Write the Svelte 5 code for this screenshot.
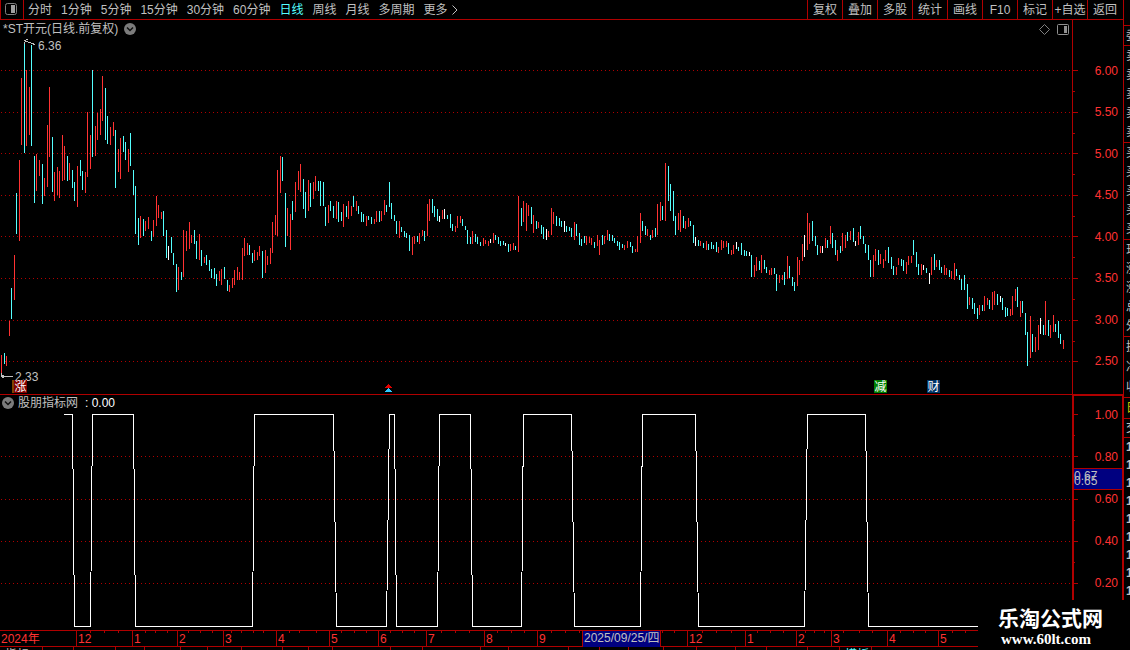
<script>
    const periods = ['分时', '1分钟', '5分钟', '15分钟', '30分钟', '60分钟', '日线', '周线', '月线', '多周期'];
    const tools = ['复权', '叠加', '多股', '统计', '画线', 'F10', '标记', '+自选', '返回'];

    let period = '日线';

    const width = 1072;
    const priceLevels = ['6.00', '5.50', '5.00', '4.50', '4.00', '3.50', '3.00', '2.50'];
    const priceLines = [70, 112, 153, 195, 236, 278, 320, 361];
    const priceMinor = [91, 133, 174, 216, 257, 299, 341];
    const valueLevels = ['1.00', '0.80', '0.60', '0.40', '0.20'];
    const valueLines = [414, 456, 499, 541, 583];
    const valueMinor = [435, 478, 520, 562];

    // colour + x, high, low
    const rawBars = `
        r1,355,375 c4,353,364 r6,356,366 r9,321,336 c11,288,319 r14,255,300 c16,193,234 r19,160,241 r21,78,145 c24,42,153
        r26,70,146 r29,87,135 c31,45,146 c34,156,203 r36,154,191 r39,160,176 c42,164,204 r44,178,196 r47,125,187 r49,87,157
        c52,137,192 r54,172,201 r57,167,195 r59,171,198 r62,135,181 r64,146,180 c67,156,181 r69,163,180 c72,170,188 c74,182,201
        r77,166,207 c80,160,176 c82,171,190 r85,172,193 r87,112,177 r90,135,169 c92,70,157 r95,126,156 r97,113,140 r100,109,135
        r102,76,121 c105,88,140 c107,116,144 r110,127,145 r113,122,136 c115,130,188 r118,149,172 r120,138,179 c123,136,152 c125,142,160
        r128,149,172 c130,133,166 c133,170,195 c135,186,234 c138,218,245 r140,216,238 c143,219,236 r145,221,231 r148,217,229 c151,231,241
        r153,220,237 r156,196,226 r158,205,218 r161,212,219 c163,211,236 c166,230,258 w168,246,260 c171,237,253 c173,253,265 c176,264,292
        r178,267,290 c181,272,280 r183,230,277 r186,231,251 r189,222,249 r191,235,243 c194,230,244 c196,241,259 r199,234,260 c201,250,266
        r204,257,263 c206,255,265 c209,260,271 c211,269,278 c214,268,279 c216,274,286 r219,271,281 r221,269,285 c224,267,279 c227,280,291
        r229,285,292 r232,278,288 r234,270,285 r237,267,280 r239,272,280 r242,248,280 r244,238,256 r247,243,255 c249,245,255 c252,253,263
        r254,250,261 r257,252,260 r259,246,256 c262,251,278 r265,250,273 r267,256,265 r270,248,264 r272,222,253 r275,215,235 r277,170,236
        r280,156,193 c282,157,181 c285,193,247 r287,208,236 r290,214,250 c292,201,220 r295,182,212 r298,171,190 r300,164,192 c303,179,209
        c305,192,218 r308,180,211 c310,183,207 r313,182,199 r315,176,191 c318,181,191 c320,181,206 c323,182,206 c325,207,226 r328,205,223
        c330,201,211 c333,206,218 r336,201,219 c338,202,222 c341,212,221 r343,204,227 c346,206,217 r348,201,219 r351,206,216 c353,196,207
        r356,201,211 c358,206,214 c361,212,222 c363,214,222 r366,216,226 c368,216,220 c371,217,224 r374,219,224 r376,211,222 c379,211,222
        r381,211,221 r384,200,215 c386,205,212 c389,182,207 c391,203,219 c394,215,221 c396,221,234 r399,221,238 c401,227,232 c404,231,237
        c406,233,238 c409,235,251 r412,237,255 r414,236,244 c417,236,242 r419,233,244 r422,230,236 c424,231,241 r427,204,236 r429,199,221
        c432,199,213 c434,206,217 c437,209,221 w439,216,222 r442,210,219 w444,209,219 c447,215,219 c450,214,228 c452,224,231 r455,226,232
        r457,216,228 r460,216,223 c462,219,226 c465,226,230 c467,230,244 c470,237,244 r472,231,244 c475,234,242 c477,237,244 c480,242,246
        r483,238,246 r485,240,244 r488,241,246 w490,239,243 r493,233,243 c495,235,240 c498,237,244 c500,241,246 c503,241,245 w505,243,246
        c508,244,252 r510,244,251 r513,243,250 c515,246,250 r518,196,252 c521,208,226 r523,201,222 r526,203,231 r528,205,216 c531,207,224
        r533,215,233 c536,221,229 r538,222,228 c541,225,234 c543,227,239 w546,229,240 r548,231,237 r551,208,235 r553,212,224 c556,216,226
        c559,218,226 c561,221,227 w564,221,232 c566,226,232 c569,227,231 c571,228,237 r574,222,240 c576,224,236 c579,233,245 c581,239,246
        c584,236,243 r586,236,245 r589,237,243 r591,238,245 c594,242,248 r597,235,246 r599,240,255 c602,235,245 r604,236,244 r607,230,240
        c609,234,241 c612,235,241 c614,238,243 c617,241,246 c619,242,250 c622,244,248 r624,245,250 r627,241,248 c630,242,247 c632,246,253
        r635,249,252 r637,236,252 r640,213,243 c642,221,231 c645,226,235 r647,229,236 c650,235,240 r652,230,238 c655,228,237 r657,204,235
        r660,202,221 c662,206,220 r665,163,221 c668,166,201 c670,184,211 c673,191,221 c675,216,235 r678,213,230 r680,210,232 c683,216,228
        r685,221,229 r688,218,227 c690,221,226 c693,225,243 w695,237,246 c698,240,246 r700,241,246 c703,243,248 r706,241,250 c708,244,250
        c711,242,249 c713,245,249 c716,242,252 r718,247,253 r721,240,250 r723,241,248 r726,241,247 c728,243,254 r731,250,255 r733,245,254
        w736,242,249 c738,247,251 c741,243,255 c744,250,256 c746,251,256 w749,252,256 c751,255,277 r754,265,277 r756,257,271 c759,261,270
        r761,255,273 c764,260,269 c766,267,273 r769,270,275 r771,268,275 c774,268,274 c776,274,291 r779,275,283 r782,275,280 c784,272,285
        r787,256,279 c789,266,278 c792,277,286 c794,282,291 r797,257,286 r799,260,275 r802,244,261 w804,235,257 r807,213,250 r809,223,244
        c812,221,241 c815,236,246 c817,245,255 r820,246,253 w822,246,253 r825,238,248 c827,240,248 r830,226,244 c832,233,248 c835,240,255
        r837,250,261 c840,246,253 r842,233,251 r845,235,248 c847,232,241 r850,231,240 c853,228,242 w855,241,246 r858,232,245 c860,226,239
        c863,236,244 c865,244,253 c868,245,260 c870,260,277 r873,255,277 r875,249,261 c878,250,265 r880,254,264 r883,259,268 r885,250,261
        c888,247,263 c891,257,269 c893,266,275 r896,267,275 r898,258,265 c901,259,266 c903,260,271 r906,262,274 r908,256,265 r911,256,263
        c913,240,255 c916,252,267 c918,264,275 r921,264,275 w923,265,270 c926,268,273 w929,273,284 r931,257,275 c934,254,270 r936,260,267
        c939,260,270 c941,267,273 r944,265,275 r946,268,275 c949,270,277 r951,271,279 r954,263,280 c956,269,276 c959,275,280 c961,279,290
        c964,275,290 c967,284,309 r969,297,305 c972,298,309 c974,303,314 c977,308,319 r979,305,315 c982,305,311 r984,296,311 r987,298,305
        c989,300,309 r992,292,310 r994,291,305 c997,294,305 w1000,296,302 c1002,298,310 c1005,307,317 c1007,308,316 r1010,309,316 r1012,296,315
        r1015,289,301 c1017,287,307 r1020,301,317 c1022,301,313 c1025,313,335 c1027,332,366 r1030,316,358 c1032,334,352 r1035,337,352
        r1038,325,350 w1040,318,334 c1043,325,335 r1045,301,335 c1048,320,336 r1050,325,338 r1053,315,332 c1055,324,332 c1058,321,338
        c1060,334,344 r1063,340,349`;

    const bars = rawBars.trim().split(/\s+/).map((item) => {
        const [x, high, low] = item.slice(1).split(',').map(Number);
        return { kind: item[0], x, high, low };
    });

    // x where the signal leaves one level and x where it reaches the other
    const flips = [
        [72, 74], [90, 92], [133, 135], [252, 254], [333, 336], [386, 389], [394, 396], [437, 439], [470, 472],
        [521, 523], [571, 574], [640, 642], [695, 698], [804, 807], [865, 868]
    ];
    let high = true;
    let signal = 'M64 414.5';
    for (const [from, to] of flips) {
        const y1 = high ? 414.5 : 626.5;
        const y2 = high ? 626.5 : 414.5;
        signal += ` L${from + 0.5} ${y1} L${to + 0.5} ${y2}`;
        high = !high;
    }
    signal += ' L1072 626.5';

    const months = [
        { x: 0, text: '2024年' }, { x: 76, text: '12' }, { x: 132, text: '1' }, { x: 177, text: '2' },
        { x: 223, text: '3' }, { x: 276, text: '4' }, { x: 329, text: '5' }, { x: 378, text: '6' },
        { x: 426, text: '7' }, { x: 484, text: '8' }, { x: 537, text: '9' },
        { x: 582, text: '2025/09/25/四', current: true }, { x: 660, text: '' }, { x: 687, text: '12' },
        { x: 745, text: '1' }, { x: 796, text: '2' }, { x: 831, text: '3' }, { x: 887, text: '4' },
        { x: 938, text: '5' }
    ];
    const weeks = [
        90, 104, 118, 145, 155, 167, 188, 200, 212, 231, 241, 253, 263, 289, 299, 316, 341, 354, 366, 390, 402,
        414, 441, 455, 469, 497, 511, 524, 551, 565, 579, 662, 674, 702, 716, 731, 757, 770, 783, 805, 814, 824,
        843, 859, 872, 900, 913, 925, 952, 965
    ];

    const tabs = [0, 42, 73, 115, 144, 180, 207, 241, 282, 308, 332, 390, 422, 480, 508, 568, 599, 628, 663, 696, 735, 766, 807, 839, 871]
        .map((x) => ({ x, text: '' }));
    tabs[0].text = '指标';
    tabs[23].text = '模板';

    const columns = (list) =>
        list.map((item, i) => `minmax(0, ${(i + 1 < list.length ? list[i + 1].x : 1123) - item.x}fr)`).join(' ');

    const badges = [
        { x: 12, text: '涨', kind: 'rise' },
        { x: 874, text: '减', kind: 'cut' },
        { x: 927, text: '财', kind: 'report' }
    ];

    const quotes = [
        { size: 'head', rows: ['委'] },
        { size: 'five', rows: ['卖', '卖', '卖', '卖', '卖'] },
        { size: 'five', rows: ['买', '买', '买', '买', '买'] },
        { size: 'five', rows: ['现', '涨', '涨', '总', '外'] },
        { size: 'three', rows: ['换', '净', '收'] },
        { size: 'name', rows: ['日'] },
        { size: 'deal', rows: ['交'] }
    ];
</script>

<div class="app">
    <div class="main">
        <header class="toolbar">
            <button class="side" aria-label="侧栏">
                <svg width="12" height="12" viewBox="0 0 12 12">
                    <rect x="0.5" y="0.5" width="11" height="11" rx="2" fill="none" stroke="#808080" />
                    <rect x="6" y="2" width="4" height="8" fill="#a0a0a0" />
                </svg>
            </button>
            <nav>
                {#each periods as name}
                    <button class:active={period === name} on:click={() => (period = name)}>{name}</button>
                {/each}
                <button class="more">更多
                    <svg width="6" height="10" viewBox="0 0 6 10"><path d="M0.5 0.5L5 5L0.5 9.5" fill="none" stroke="#c0c0c0" /></svg>
                </button>
            </nav>
            <div class="tools">
                {#each tools as name}
                    <button>{name}</button>
                {/each}
            </div>
        </header>

        <section class="pane price">
            <svg class="plot" viewBox="0 20 1072 374" preserveAspectRatio="none">
                {#each priceLines as y}
                    <line class="level" x1="1" x2={width} y1={y + 0.5} y2={y + 0.5} />
                {/each}
                {#each bars as bar}
                    <line class={bar.kind} x1={bar.x + 0.5} x2={bar.x + 0.5} y1={bar.high} y2={bar.low} />
                {/each}
                <path class="mark" d="M24.5 44V41.5M24 40.5L28 39.5M25 41L35 44.5M1.5 376V373M1 376.5H13M2 375.5H4M2 377.5H4" />
            </svg>
            <div class="caption">
                <span>*ST开元(日线.前复权)</span>
                <button aria-label="展开">
                    <svg width="12" height="12" viewBox="0 0 12 12">
                        <circle cx="6" cy="6" r="6" fill="#7c7c7c" />
                        <path d="M3 4.5L6 7.5L9 4.5" fill="none" stroke="#101010" stroke-width="1.5" />
                    </svg>
                </button>
                <div class="corner">
                    <svg width="11" height="11" viewBox="0 0 11 11"><path d="M5.5 0.5L10.5 5.5L5.5 10.5L0.5 5.5Z" fill="none" stroke="#808080" /></svg>
                    <svg width="12" height="11" viewBox="0 0 12 11">
                        <rect x="0.5" y="0.5" width="11" height="10" rx="1" fill="none" stroke="#909090" />
                        <rect x="7" y="2" width="3" height="7" fill="#909090" />
                    </svg>
                </div>
            </div>
            <span class="note top">6.36</span>
            <span class="note bottom">2.33</span>
            {#each badges as badge}
                <span class="badge {badge.kind}" style="left: {(badge.x / width) * 100}%">{badge.text}</span>
            {/each}
            <svg class="arrows" style="left: {(385 / width) * 100}%" width="7" height="8" viewBox="0 0 7 8">
                <path d="M3 0h1v1h1v1h1v1h1v1H0V3h1V2h1V1h1z" fill="#e00000" />
                <path d="M3 4h1v1h1v1h1v1h1v1H0V7h1V6h1V5h1z" fill="#30c8ff" />
            </svg>
        </section>
        <aside class="scale">
            <svg class="ticks" viewBox="0 20 6 374" preserveAspectRatio="none">
                {#each priceLines as y}
                    <line x1="0" x2="5" y1={y + 0.5} y2={y + 0.5} />
                {/each}
                {#each priceMinor as y}
                    <line x1="0" x2="2" y1={y + 0.5} y2={y + 0.5} />
                {/each}
            </svg>
            <div class="labels">
                {#each priceLevels as level}
                    <span>{level}</span>
                {/each}
            </div>
        </aside>

        <section class="pane value">
            <svg class="plot" viewBox="0 395 1072 235" preserveAspectRatio="none">
                {#each valueLines.slice(1) as y}
                    <line class="level" x1="1" x2={width} y1={y + 0.5} y2={y + 0.5} />
                {/each}
                <path class="signal" d={signal} />
            </svg>
            <div class="caption">
                <button aria-label="指标">
                    <svg width="12" height="12" viewBox="0 0 12 12">
                        <circle cx="6" cy="6" r="6" fill="#7c7c7c" />
                        <path d="M3 4.5L6 7.5L9 4.5" fill="none" stroke="#101010" stroke-width="1.5" />
                    </svg>
                </button>
                <span>股朋指标网</span>
                <span class="latest">: 0.00</span>
            </div>
        </section>
        <aside class="scale framed">
            <svg class="ticks" viewBox="0 396 6 234" preserveAspectRatio="none">
                {#each valueLines as y}
                    <line x1="0" x2="4" y1={y + 0.5} y2={y + 0.5} />
                {/each}
                {#each valueMinor as y}
                    <line x1="0" x2="1" y1={y + 0.5} y2={y + 0.5} />
                {/each}
            </svg>
            <div class="labels">
                {#each valueLevels as level}
                    <span>{level}</span>
                {/each}
            </div>
            <div class="cursor">
                <span>0.67</span>
                <span>0.65</span>
            </div>
        </aside>

        <div class="months" style="grid-template-columns: {columns(months)}">
            {#each months as month}
                <span class:current={month.current}>{month.text}</span>
            {/each}
            <svg viewBox="0 0 1123 2" preserveAspectRatio="none">
                {#each weeks as x}
                    <line x1={x + 0.5} x2={x + 0.5} y1="0" y2="2" />
                {/each}
            </svg>
        </div>
        <div class="tabs" style="grid-template-columns: {columns(tabs)}">
            {#each tabs as tab, i}
                <span class:active={i === 23}>{tab.text}</span>
            {/each}
        </div>
    </div>

    <aside class="quotes">
        {#each quotes as group}
            <div class="group {group.size}">
                {#each group.rows as row}
                    <span>{row}</span>
                {/each}
            </div>
        {/each}
        <div class="deals">
            {#each Array(9) as _}
                <span>14:57</span>
            {/each}
        </div>
    </aside>

    <div class="brand">
        <strong>乐淘公式网</strong>
        <a href="http://www.60lt.com">www.60lt.com</a>
    </div>
</div>

<style>
    :global(body) {
        margin: 0;
        background: #000;
    }

    .app {
        position: relative;
        display: grid;
        grid-template-columns: minmax(0, 1fr) 7px;
        height: 100vh;
        overflow: hidden;
        background: #000;
        color: #c0c0c0;
        font-family: "Liberation Sans", "Noto Sans CJK SC", sans-serif;
        font-size: 12px;
        line-height: 16px;
    }

    .main {
        display: grid;
        grid-template-columns: minmax(0, 1fr) 51px;
        grid-template-rows: 20px minmax(0, 374fr) minmax(0, 236fr) 17px 3px;
        min-height: 0;
    }

    button {
        padding: 0;
        border: 0;
        background: none;
        color: inherit;
        font: inherit;
        white-space: nowrap;
        cursor: pointer;
    }

    svg {
        display: block;
    }

    .toolbar,
    .months,
    .tabs {
        grid-column: 1 / -1;
    }

    .toolbar {
        display: flex;
        border-bottom: 1px solid #b00000;
    }

    .side {
        display: flex;
        width: 24px;
        box-sizing: border-box;
        padding: 3px 0 0 4px;
        border-left: 1px solid #b00000;
        border-right: 1px solid #b00000;
    }

    nav {
        display: flex;
        flex: 1;
        gap: 9px;
        padding-left: 4px;
    }

    .active {
        color: #54ffff;
    }

    .more {
        display: flex;
        align-items: center;
        gap: 4px;
    }

    .tools {
        display: flex;
        padding-right: 1px;
    }

    .tools button {
        width: 35px;
        box-sizing: border-box;
        border-left: 1px solid #b00000;
    }

    .pane {
        position: relative;
        min-width: 0;
    }

    .value {
        border-top: 1px solid #b00000;
    }

    .plot {
        position: absolute;
        width: 100%;
        height: 100%;
        shape-rendering: crispEdges;
    }

    .level {
        stroke: #b00000;
        stroke-dasharray: 1 3;
    }

    .r {
        stroke: #ff3232;
    }

    .c {
        stroke: #54ffff;
    }

    .w {
        stroke: #fff;
    }

    .mark {
        fill: none;
        stroke: #c0c0c0;
    }

    .signal {
        fill: none;
        stroke: #fff;
    }

    .caption {
        position: relative;
        display: flex;
        align-items: center;
        gap: 6px;
        height: 18px;
        padding-left: 3px;
    }

    .value .caption {
        gap: 4px;
        height: 16px;
        padding-left: 2px;
    }

    .caption span {
        line-height: 18px;
    }

    .latest {
        padding-left: 3px;
        color: #fff;
    }

    .corner {
        display: flex;
        gap: 7px;
        margin-left: auto;
        padding-right: 3px;
    }

    .note {
        position: absolute;
        line-height: 12px;
    }

    .note.top {
        top: 20px;
        left: 38px;
    }

    .note.bottom {
        bottom: 11px;
        left: 15px;
    }

    .badge {
        position: absolute;
        bottom: 1px;
        width: 13px;
        height: 13px;
        color: #fff;
        line-height: 14px;
        text-align: center;
    }

    .rise {
        border-left: 2px solid #804000;
        background: #800000;
    }

    .cut {
        background: #008000;
    }

    .report {
        background: #003468;
    }

    .arrows {
        position: absolute;
        bottom: 2px;
    }

    .scale {
        position: relative;
        display: flex;
        justify-content: space-between;
        border-left: 1px solid #b00000;
        color: #ff3232;
    }

    .framed {
        border: solid #b00000;
        border-width: 2px 1px 0 2px;
    }

    .ticks {
        width: 6px;
        height: 100%;
        stroke: #b00000;
        shape-rendering: crispEdges;
    }

    .labels {
        display: flex;
        flex-direction: column;
        justify-content: space-between;
        padding: 43px 5px 25px 0;
    }

    .framed .labels {
        padding: 11px 4px 39px 0;
    }

    .cursor {
        position: absolute;
        top: 72px;
        left: 0;
        right: 0;
        height: 20px;
        border-top: 1px solid #b00000;
        border-bottom: 1px solid #b00000;
        background: #000080;
        color: #c0c0c0;
    }

    .cursor span {
        position: absolute;
        top: 0;
        left: 0;
        line-height: 14px;
    }

    .cursor span + span {
        top: 5px;
    }

    .months {
        position: relative;
        display: grid;
        box-sizing: border-box;
        border-top: 1px solid #b00000;
        border-bottom: 1px solid #b00000;
        color: #ff3232;
    }

    .months span,
    .tabs span {
        box-sizing: border-box;
        padding-left: 1px;
        border-left: 1px solid #b00000;
        white-space: nowrap;
    }

    .months span:first-child,
    .tabs span:first-child {
        border-left: 0;
    }

    .months .current {
        background: #000080;
        color: #c0c0c0;
        line-height: 14px;
    }

    .months svg {
        position: absolute;
        width: 100%;
        height: 2px;
        stroke: #b00000;
        shape-rendering: crispEdges;
    }

    .tabs {
        display: grid;
        overflow: hidden;
        line-height: 16px;
    }

    .tabs span {
        padding-left: 5px;
    }

    .quotes {
        min-height: 0;
        padding-top: 25px;
        overflow: hidden;
        border-left: 1px solid #b00000;
    }

    .group {
        display: flex;
        flex-direction: column;
        justify-content: space-around;
        box-sizing: border-box;
        padding-left: 2px;
        border-top: 1px solid #b00000;
    }

    .head {
        height: 20px;
    }

    .five {
        height: 97px;
    }

    .three {
        height: 61px;
    }

    .name {
        height: 21px;
        color: #c8c800;
    }

    .deal {
        height: 19px;
    }

    .deals {
        display: flex;
        flex-direction: column;
        padding-left: 2px;
        border-top: 1px solid #b00000;
        font-weight: bold;
        line-height: 18px;
    }

    .brand {
        position: absolute;
        right: 0;
        bottom: 0;
        display: flex;
        flex-direction: column;
        box-sizing: border-box;
        width: 152px;
        height: 50px;
        padding: 7px 0 0 20px;
        background: #000;
        color: #fff;
    }

    .brand strong {
        font-size: 21px;
        line-height: 24px;
    }

    .brand a {
        padding-left: 3px;
        color: #fff;
        font: bold 15px/16px "Liberation Serif", serif;
        text-decoration: none;
    }
</style>
